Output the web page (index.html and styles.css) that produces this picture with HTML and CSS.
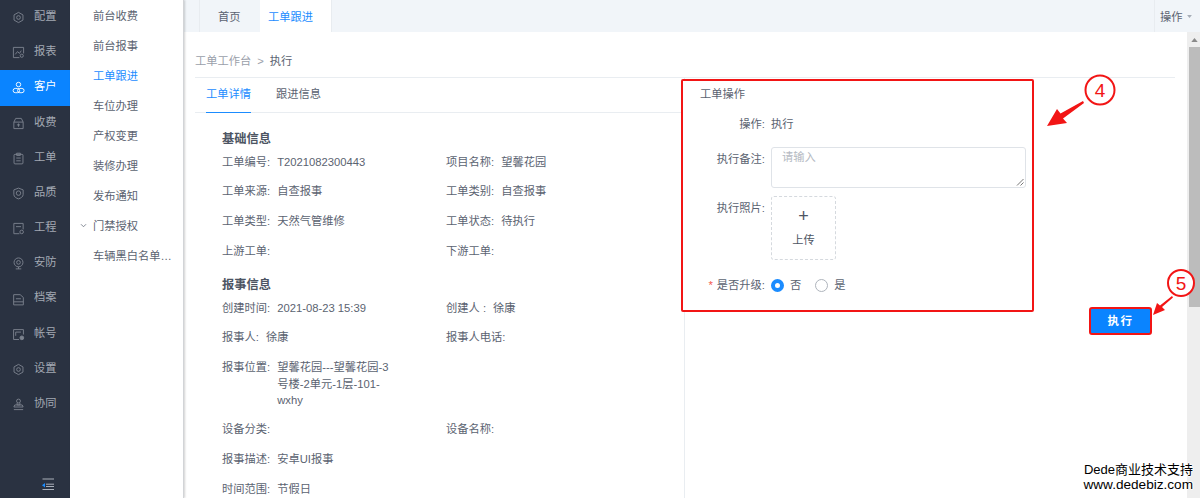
FILE: index.html
```html
<!DOCTYPE html>
<html lang="zh-CN">
<head>
<meta charset="utf-8">
<title>工单跟进</title>
<link rel="stylesheet" href="styles.css">
</head>
<body>
<div class="app">
  <nav class="rail">
    <a class="rail-item"><svg class="ri" viewBox="0 0 14 14"><path d="M7 1.500l4.800 2.700v5.600L7 12.500 2.200 9.800V4.200z"/><circle cx="7" cy="7" r="2"/></svg><span>配置</span></a>
    <a class="rail-item"><svg class="ri" viewBox="0 0 14 14"><path d="M8 12.500H1.500v-11h11V8"/><path d="M3.500 9l2.500-3 2 2 2-3"/><circle cx="10.500" cy="10.500" r="1.700"/></svg><span>报表</span></a>
    <a class="rail-item is-active"><svg class="ri" viewBox="0 0 14 14"><circle cx="7" cy="3.800" r="2.400"/><rect x="1.200" y="8" width="7" height="4.600" rx="2.300"/><rect x="6" y="8" width="7" height="4.600" rx="2.300"/></svg><span>客户</span></a>
    <a class="rail-item"><svg class="ri" viewBox="0 0 14 14"><path d="M2 5.500L4 1.500h6l2 4v7H2z"/><path d="M2 5.500h10M7 7v3.500M5.300 8.500h3.400"/></svg><span>收费</span></a>
    <a class="rail-item"><svg class="ri" viewBox="0 0 14 14"><rect x="2.200" y="2.500" width="9.600" height="10.300" rx="1"/><path d="M5 1.300h4v2.400H5zM4.600 6.500h4.800M4.600 9.500h4.800"/></svg><span>工单</span></a>
    <a class="rail-item"><svg class="ri" viewBox="0 0 14 14"><path d="M7 1.200l5 1.900v5.100c0 2.300-2.600 3.900-5 4.600-2.400-.7-5-2.300-5-4.600V3.100z"/><circle cx="7" cy="6.600" r="2.400"/></svg><span>品质</span></a>
    <a class="rail-item"><svg class="ri" viewBox="0 0 14 14"><path d="M8 12.600H2V1.500h10V8"/><path d="M4.300 5h5.400"/><circle cx="10.400" cy="10.700" r="1.900"/></svg><span>工程</span></a>
    <a class="rail-item"><svg class="ri" viewBox="0 0 14 14"><circle cx="7" cy="5.800" r="4.800"/><circle cx="7" cy="5.800" r="2"/><path d="M4 12.800h6M7 10.600v2.200"/></svg><span>安防</span></a>
    <a class="rail-item"><svg class="ri" viewBox="0 0 14 14"><path d="M1.800 1.800h7l3.400 3v8H1.800z"/><path d="M4.200 6.200h5.400M1.800 9.500h10.400"/></svg><span>档案</span></a>
    <a class="rail-item"><svg class="ri" viewBox="0 0 14 14"><path d="M7.600 12.400H1.700V1.700h10.600V7"/><path d="M4 4.400h5.600M4 4.400v4"/><circle cx="10.600" cy="10.600" r="2" class="dot"/></svg><span>帐号</span></a>
    <a class="rail-item"><svg class="ri" viewBox="0 0 14 14"><path d="M7 1.500l4.800 2.700v5.600L7 12.500 2.200 9.800V4.200z"/><circle cx="7" cy="7" r="2"/></svg><span>设置</span></a>
    <a class="rail-item"><svg class="ri" viewBox="0 0 14 14"><circle cx="7" cy="3.300" r="2.100"/><path d="M5.500 5.400v2.100h3V5.400M3 7.500h8l1 2.200H2zM2 12.500h10"/></svg><span>协同</span></a>
    <div class="collapse">
      <svg viewBox="0 0 14 13" width="14" height="13"><path class="cl" d="M1.500 1h11.500M5 6.200h8M1.500 11.500h11.500M5 8.500h8"/><path class="ca" d="M1 7.200l3-2.200v4.400z"/></svg>
    </div>
  </nav>

  <aside class="submenu">
    <a class="sub-item">前台收费</a>
    <a class="sub-item">前台报事</a>
    <a class="sub-item is-current">工单跟进</a>
    <a class="sub-item">车位办理</a>
    <a class="sub-item">产权变更</a>
    <a class="sub-item">装修办理</a>
    <a class="sub-item">发布通知</a>
    <a class="sub-item"><svg class="chev" viewBox="0 0 8 6"><path d="M1 1.500l3 3 3-3"/></svg>门禁授权</a>
    <a class="sub-item">车辆黑白名单…</a>
  </aside>

  <main class="main">
    <header class="tabbar">
      <div class="tab tab-home">首页</div>
      <div class="tab tab-active">工单跟进</div>
      <div class="tab-actions">操作<svg class="caret" viewBox="0 0 8 5"><path d="M0 0h8L4 5z"/></svg></div>
    </header>

    <div class="body">
      <div class="content">
        <div class="crumb"><span class="crumb-link">工单工作台</span><span class="crumb-sep">&gt;</span><span>执行</span></div>
        <div class="split">
          <section class="detail">
            <div class="dtabs">
              <div class="dtab is-on">工单详情</div>
              <div class="dtab">跟进信息</div>
            </div>
            <h3 class="sec sec-first">基础信息</h3>
            <div class="grid">
              <div class="kv"><span>工单编号:</span><span>T2021082300443</span></div>
              <div class="kv"><span>项目名称:</span><span>望馨花园</span></div>
              <div class="kv"><span>工单来源:</span><span>自查报事</span></div>
              <div class="kv"><span>工单类别:</span><span>自查报事</span></div>
              <div class="kv"><span>工单类型:</span><span>天然气管维修</span></div>
              <div class="kv"><span>工单状态:</span><span>待执行</span></div>
              <div class="kv"><span>上游工单:</span></div>
              <div class="kv"><span>下游工单:</span></div>
            </div>
            <h3 class="sec">报事信息</h3>
            <div class="grid">
              <div class="kv"><span>创建时间:</span><span>2021-08-23 15:39</span></div>
              <div class="kv"><span>创建人 :</span><span>徐康</span></div>
              <div class="kv"><span>报事人:</span><span>徐康</span></div>
              <div class="kv"><span>报事人电话:</span></div>
              <div class="kv kv-tall"><span>报事位置:</span><span class="wrap">望馨花园---望馨花园-3号楼-2单元-1层-101-wxhy</span></div>
              <div class="kv"></div>
              <div class="kv"><span>设备分类:</span></div>
              <div class="kv"><span>设备名称:</span></div>
              <div class="kv"><span>报事描述:</span><span>安卓UI报事</span></div>
              <div class="kv"></div>
              <div class="kv"><span>时间范围:</span><span>节假日</span></div>
              <div class="kv"></div>
            </div>
          </section>

          <section class="ops">
            <form class="op-box">
              <div class="op-title">工单操作</div>
              <div class="field f-op"><label class="flabel">操作:</label><span>执行</span></div>
              <div class="field f-note"><label class="flabel flabel-low">执行备注:</label><div class="textarea">请输入<svg class="grip" viewBox="0 0 8 8"><path d="M1 7.500L7.500 1M4.500 7.500l3-3"/></svg></div></div>
              <div class="field f-photo"><label class="flabel flabel-low">执行照片:</label><div class="upload"><span class="plus">+</span><span>上传</span></div></div>
              <div class="field f-radio"><label class="flabel"><i class="req">*</i>是否升级:</label>
                <span class="radio is-on"></span><span class="rtext">否</span>
                <span class="radio"></span><span class="rtext">是</span>
              </div>
            </form>
            <button class="exec" type="button">执行</button>
          </section>
        </div>
      </div>
      <div class="scrollbar">
        <div class="sb-up"><svg viewBox="0 0 8 5" width="7" height="4"><path d="M0 5L4 0l4 5z"/></svg></div>
        <div class="sb-thumb"></div>
      </div>
    </div>
  </main>
</div>

<svg class="marks" viewBox="0 0 1200 498" width="1200" height="498">
  <circle cx="1100" cy="90" r="14.500" class="ring"/>
  <text x="1100" y="97" class="num">4</text>
  <path class="arrow" d="M1084 103L1063 118.500L1067 123L1047 126L1057 109L1060.500 113.500L1083 101z"/>
  <circle cx="1181" cy="283" r="13" class="ring"/>
  <text x="1181" y="290" class="num">5</text>
  <path class="arrow" d="M1173 297.500L1162 307L1165 310L1153 315L1157 303L1160 305.500L1172 296z"/>
</svg>
<div class="stamp"><span class="stamp-a">Dede商业技术支持</span><span class="stamp-b">www.dedebiz.com</span></div>
</body>
</html>
```
FILE: styles.css
```css
* { box-sizing: border-box; }
html, body { margin: 0; height: 498px; overflow: hidden; }
body {
  position: relative;
  font-family: "Liberation Sans", "Noto Sans CJK SC", sans-serif;
  font-size: 11.25px;
  color: #5b6371;
  background: #fff;
}
.app { display: flex; height: 498px; }

/* rail */
.rail { width: 70px; flex: none; background: #2a3241; display: flex; flex-direction: column; position: relative; color: #a3a9b3; }
.rail-item { height: 35.2px; flex: none; display: flex; align-items: center; padding-left: 12px; gap: 9px; line-height: 1; }
.rail-item span { font-size: 11.25px; position: relative; top: -1px; }
.ri { width: 13px; height: 13px; flex: none; fill: none; stroke: #7b828e; stroke-width: 1; }
.ri .dot { fill: #7b828e; }
.is-active { background: #0a84ff; color: #fff; }
.is-active .ri { stroke: #fff; }
.collapse { margin-top: auto; margin-bottom: 7px; padding-left: 41px; line-height: 0; }
.cl { stroke: #aab0ba; fill: none; stroke-width: 1; }
.ca { fill: #1b8cff; }

/* submenu */
.submenu { width: 114px; flex: none; background: #fff; border-right: 1px solid #d2d4d7; box-shadow: 1px 0 2px rgba(0,0,0,.18); display: flex; flex-direction: column; position: relative; z-index: 1; }
.sub-item { height: 30.05px; flex: none; display: flex; align-items: center; padding-left: 23px; position: relative; color: #5b6371; white-space: nowrap; }
.is-current { color: #1b8cff; }
.chev { position: absolute; left: 10px; top: 13px; width: 7px; height: 5px; fill: none; stroke: #6b7280; stroke-width: 1; }

/* main */
.main { flex: 1; min-width: 0; display: flex; flex-direction: column; }
.tabbar { height: 32px; flex: none; background: #f1f5f9; display: flex; align-items: stretch; padding-left: 15px; }
.tab { display: flex; align-items: center; }
.tab-home { width: 61px; border-left: 1px solid #e8ecf0; padding-left: 18px; }
.tab-active { width: 72px; background: #fff; color: #1b8cff; border-right: 1px solid #e8ecf0; padding-left: 8px; }
.tab-actions { margin-left: auto; width: 46px; border-left: 1px solid #e8ecf0; display: flex; align-items: center; padding-left: 5px; gap: 4px; }
.caret { width: 5px; height: 3px; fill: #a6adb7; }

.body { flex: 1; min-height: 0; display: flex; }
.content { flex: 1; min-width: 0; padding: 0 12px 0 11px; display: flex; flex-direction: column; }
.crumb { height: 46px; flex: none; padding-top: 21px; border-bottom: 1px solid #e9edf1; line-height: 16px; display: flex; }
.crumb-link { color: #9aa0aa; }
.crumb-sep { color: #9aa0aa; margin: 0 6px; }
.split { flex: 1; min-height: 0; display: flex; }

/* detail */
.detail { width: 490px; flex: none; border-right: 1px solid #e9edf1; }
.dtabs { height: 35px; display: flex; padding-left: 11px; gap: 25px; border-bottom: 1px solid #e9edf1; }
.dtab { height: 35px; line-height: 33px; width: 45px; text-align: center; white-space: nowrap; }
.dtab.is-on { color: #1b8cff; border-bottom: 1px solid #1b8cff; }
.sec { margin: 0 0 0 27px; font-size: 12.25px; line-height: 18px; font-weight: 700; color: #4d5563; }
.sec-first { margin-top: 17px; }
.sec + .grid { margin-top: -1px; }
.grid { display: grid; grid-template-columns: 224px 1fr; padding-left: 27px; margin-bottom: 10px; }
.kv { min-height: 29.75px; display: flex; gap: 7px; line-height: 16.5px; padding-top: 6.5px; }
.kv-tall { min-height: 62px; }
.wrap { width: 112px; }

/* operations */
.ops { flex: 1; display: flex; flex-direction: column; }
.op-box { width: 353px; height: 233px; margin: 1px 0 0 -4px; border: 2.5px solid #f21515; border-radius: 2px; background: #fff; position: relative; }
.op-title { margin: 5px 0 0 17px; line-height: 16px; }
.field { display: flex; align-items: flex-start; line-height: 16px; }
.flabel { width: 88px; flex: none; text-align: right; padding-right: 6px; }
.flabel-low { padding-top: 4px; }
.f-op { margin-top: 14px; }
.f-note { margin-top: 15px; }
.f-photo { margin-top: 8px; }
.f-radio { margin-top: 17px; align-items: center; }
.textarea { width: 255px; height: 41px; border: 1px solid #dfe3e8; border-radius: 3px; padding: 1px 10px; color: #b5bac2; position: relative; }
.grip { position: absolute; right: 1px; bottom: 1px; width: 8px; height: 8px; stroke: #777; fill: none; stroke-width: 1; }
.upload { width: 65px; height: 64px; border: 1px dashed #d5d9de; border-radius: 3px; display: flex; flex-direction: column; align-items: center; padding-top: 7px; color: #4d5563; }
.plus { font-size: 18px; line-height: 24px; margin-bottom: 4px; }
.radio { width: 13px; height: 13px; border: 1px solid #aeb4bc; border-radius: 50%; flex: none; }
.radio.is-on { border: 4px solid #1b8cff; }
.rtext { margin: 0 14px 0 6px; }
.req { color: #f5544a; font-style: normal; margin-right: 4px; }

.exec { align-self: flex-end; width: 63px; height: 28px; margin: -5px 23px 0 0; background: #0a84ff; border: 2px solid #f21515; border-radius: 3px; color: #fff; font: 700 11.5px/1 "Noto Sans CJK SC", sans-serif; letter-spacing: 1.5px; padding: 0; }

/* scrollbar */
.scrollbar { width: 13px; flex: none; background: #eee; display: flex; flex-direction: column; padding-left: 2px; }
.sb-up { height: 15px; display: flex; align-items: center; justify-content: center; fill: #8a8a8a; }
.sb-thumb { height: 260px; background: #bcbcbc; }

/* annotations */
.marks { position: absolute; left: 0; top: 0; pointer-events: none; }
.ring { fill: #fff; stroke: #f21515; stroke-width: 2; }
.num { fill: #f21515; font: 19px "Liberation Sans", sans-serif; text-anchor: middle; }
.arrow { fill: #f21515; }
.stamp { position: absolute; right: 0; bottom: 0; height: 44px; color: #000; padding: 8px 7px 0 0; white-space: nowrap; display: flex; flex-direction: column; align-items: flex-end; text-shadow: 1px 0 0 #fff, -1px 0 0 #fff, 0 1px 0 #fff, 0 -1px 0 #fff; }
.stamp-a { font: 13px/15px "Liberation Sans", "Noto Sans CJK SC", sans-serif; }
.stamp-b { font: 13.6px/15px "Liberation Sans", sans-serif; }
```
